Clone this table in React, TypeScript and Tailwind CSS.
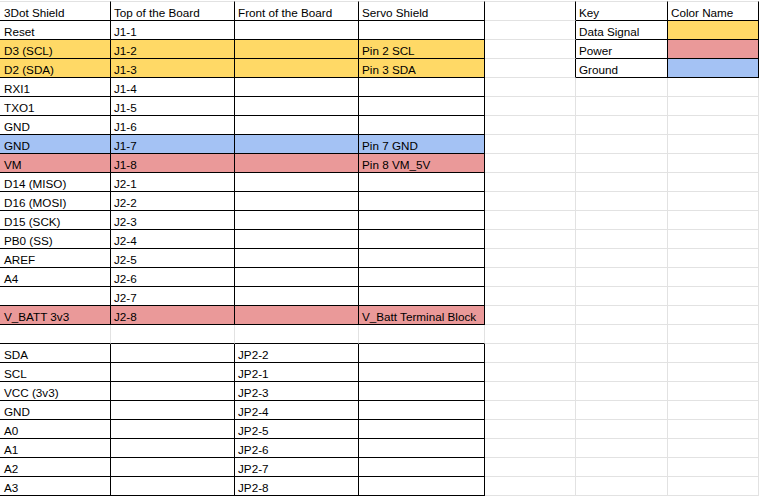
import React from "react";

type Color = "" | "y" | "r" | "b";

const main: [string, string, string, string, Color][] = [
  ["3Dot Shield", "Top of the Board", "Front of the Board", "Servo Shield", ""],
  ["Reset", "J1-1", "", "", ""],
  ["D3 (SCL)", "J1-2", "", "Pin 2 SCL", "y"],
  ["D2 (SDA)", "J1-3", "", "Pin 3 SDA", "y"],
  ["RXI1", "J1-4", "", "", ""],
  ["TXO1", "J1-5", "", "", ""],
  ["GND", "J1-6", "", "", ""],
  ["GND", "J1-7", "", "Pin 7 GND", "b"],
  ["VM", "J1-8", "", "Pin 8 VM_5V", "r"],
  ["D14 (MISO)", "J2-1", "", "", ""],
  ["D16 (MOSI)", "J2-2", "", "", ""],
  ["D15 (SCK)", "J2-3", "", "", ""],
  ["PB0 (SS)", "J2-4", "", "", ""],
  ["AREF", "J2-5", "", "", ""],
  ["A4", "J2-6", "", "", ""],
  ["", "J2-7", "", "", ""],
  ["V_BATT 3v3", "J2-8", "", "V_Batt Terminal Block", "r"],
  ["", "", "", "", ""],
  ["SDA", "", "JP2-2", "", ""],
  ["SCL", "", "JP2-1", "", ""],
  ["VCC (3v3)", "", "JP2-3", "", ""],
  ["GND", "", "JP2-4", "", ""],
  ["A0", "", "JP2-5", "", ""],
  ["A1", "", "JP2-6", "", ""],
  ["A2", "", "JP2-7", "", ""],
  ["A3", "", "JP2-8", "", ""],
];

const key: [string, Color][] = [
  ["Key", ""],
  ["Data Signal", "y"],
  ["Power", "r"],
  ["Ground", "b"],
];

const bg: Record<Color, string> = {
  "": "bg-white",
  y: "bg-[#ffd966]",
  r: "bg-[#ea9999]",
  b: "bg-[#a4c2f4]",
};

function Cell({
  text,
  color,
  right,
  bottom,
  top,
  first,
}: {
  text: string;
  color: Color;
  right: boolean;
  bottom: boolean;
  top: boolean;
  first?: boolean;
}) {
  return (
    <div
      className={
        "flex items-end overflow-hidden whitespace-nowrap pb-[1px] leading-[13px] text-[11.7px] text-black border-r border-b " +
        (first ? "pl-[4px] " : "pl-[3px] ") +
        (top ? "border-t border-t-[#e2e2e2] " : "") +
        (right ? "border-r-black " : "border-r-[#e2e2e2] ") +
        (bottom ? "border-b-black " : "border-b-[#e2e2e2] ") +
        bg[color]
      }
    >
      {text}
    </div>
  );
}

export default function App() {
  const cells: React.ReactNode[] = [];
  main.forEach((row, r) => {
    const inTable1 = r <= 16;
    const inTable2 = r >= 18;
    const inTable = inTable1 || inTable2;
    const bottomBlack = inTable || r === 17;
    for (let c = 0; c < 4; c++) {
      cells.push(
        <Cell
          key={`m${r}-${c}`}
          text={row[c]}
          color={row[4]}
          right={inTable}
          bottom={bottomBlack}
          top={r === 0}
          first={c === 0}
        />
      );
    }
    cells.push(
      <Cell key={`e${r}`} text="" color="" right={r <= 3} bottom={false} top={r === 0} />
    );
    if (r <= 3) {
      const [label, col] = key[r];
      cells.push(
        <Cell key={`f${r}`} text={label} color="" right bottom top={r === 0} />
      );
      cells.push(
        <Cell
          key={`g${r}`}
          text={r === 0 ? "Color Name" : ""}
          color={col}
          right
          bottom
          top={r === 0}
        />
      );
    } else {
      cells.push(<Cell key={`f${r}`} text="" color="" right={false} bottom={false} top={false} />);
      cells.push(<Cell key={`g${r}`} text="" color="" right={false} bottom={false} top={false} />);
    }
  });

  return (
    <div
      className="w-[759px] h-[497px] bg-white overflow-hidden pt-px"
      style={{ fontFamily: '"Liberation Sans", Arial, sans-serif' }}
    >
      <div className="grid grid-cols-[111px_124px_124px_126px_91px_92px_91px] grid-rows-[20px_repeat(25,19px)]">
        {cells}
      </div>
    </div>
  );
}
